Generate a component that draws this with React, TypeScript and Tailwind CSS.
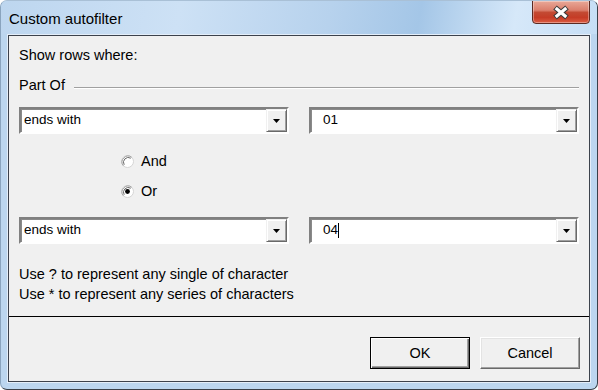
import React from "react";

function Arrow() {
  return (
    <div className="w-[21px] h-full flex items-center justify-center bg-[#f0f0f0] border border-t-[#f0f0f0] border-l-[#f0f0f0] border-r-[#696969] border-b-[#696969] shadow-[inset_1px_1px_0_#ffffff,inset_-1px_-1px_0_#a0a0a0]">
      <svg width="7" height="4" viewBox="0 0 7 4">
        <polygon points="0,0 7,0 3.5,4" fill="#000" />
      </svg>
    </div>
  );
}

function Combo({ text, pl, caret }: { text: string; pl: string; caret?: boolean }) {
  return (
    <div className="w-[270px] h-[27px] flex bg-white border-2 border-t-[#808080] border-l-[#808080] border-r-[#ffffff] border-b-[#ffffff] shadow-[inset_1px_1px_0_#8a8a8a]">
      <div className={`flex-1 flex items-start pt-[3px] text-[13.5px] leading-[16px] text-black ${pl}`}>
        <span>{text}</span>
        {caret && <span className="w-px h-[15px] bg-black mt-[1px]" />}
      </div>
      <Arrow />
    </div>
  );
}

function Radio({ checked, label }: { checked?: boolean; label: string }) {
  return (
    <div className="h-[30px] flex items-center pl-[102px] gap-[7px]">
      <svg width="13" height="13" viewBox="0 0 13 13">
        <circle cx="6.5" cy="6.5" r="6" fill="#ffffff" stroke="#d4d4d4" strokeWidth="1" />
        <path d="M2.3 10.7 A6 6 0 0 1 10.7 2.3" fill="none" stroke="#a0a0a0" strokeWidth="1" />
        <path d="M3.2 9.8 A4.8 4.8 0 0 1 9.8 3.2" fill="none" stroke="#696969" strokeWidth="1" />
        {checked && <circle cx="6.5" cy="6.5" r="2.4" fill="#000" />}
      </svg>
      <span className="text-[14.5px] leading-[20px] text-black">{label}</span>
    </div>
  );
}

export default function App() {
  return (
    <div className="w-[598px] h-[390px] flex flex-col rounded-[7px] border border-[#3a4048] border-l-[#8aa4be] border-t-[#a9c0d6] bg-[#bcd6ef] overflow-hidden font-['Liberation_Sans',Arial,sans-serif]">
      {/* title bar */}
      <div className="h-[33px] flex items-start bg-[linear-gradient(100deg,#bdd6ef_0%,#cde1f5_30%,#b7d2ed_55%,#a4c6e7_70%,#d6e8f9_86%,#c6def5_100%)]">
        <div className="pl-[8px] pt-[9px] text-[15px] leading-[17px] text-black">Custom autofilter</div>
        <div className="ml-auto mr-[7px] -mt-px w-[58px] h-[24px] rounded-b-[4px] border border-[#5b2a22] flex items-center justify-center bg-[linear-gradient(180deg,#e9a898_0%,#db7f6c_42%,#c34a33_52%,#c53c26_75%,#dc5d43_100%)] shadow-[inset_0_0_0_1px_rgba(255,255,255,0.35)]">
          <svg width="18" height="15" viewBox="0 0 18 15">
            <path d="M3 2.5 L15 12.5 M15 2.5 L3 12.5" stroke="#3c3c3c" strokeWidth="5.5" strokeLinecap="butt" />
            <path d="M3.7 3.1 L14.3 11.9 M14.3 3.1 L3.7 11.9" stroke="#ffffff" strokeWidth="3.2" strokeLinecap="butt" />
          </svg>
        </div>
      </div>
      {/* client */}
      <div className="flex-1 mx-[6px] mb-[6px] border border-[#e4eef9] flex">
        <div className="flex-1 border border-[#3c424c] flex flex-col bg-[#f0f0f0]">
          <div className="h-[281px] border-b border-black pl-[10px] pr-[10px] pt-[9px] flex flex-col text-black">
            <div className="h-[20px] text-[14.5px] leading-[20px]">Show rows where:</div>
            <div className="mt-[10px] h-[20px] flex items-start">
              <span className="text-[14.5px] leading-[20px]">Part Of</span>
              <div className="flex-1 ml-[9px] mt-[12px] h-px bg-[#a0a0a0] shadow-[0_1px_0_#ffffff]" />
            </div>
            <div className="mt-[12px] flex gap-[20px]">
              <Combo text="ends with" pl="pl-[3px]" />
              <Combo text="01" pl="pl-[12px]" />
            </div>
            <div className="mt-[12px] flex flex-col">
              <Radio label="And" />
              <Radio label="Or" checked />
            </div>
            <div className="mt-[11px] flex gap-[20px]">
              <Combo text="ends with" pl="pl-[3px]" />
              <Combo text="04" pl="pl-[12px]" caret />
            </div>
            <div className="mt-[20px] text-[14.5px] leading-[20px]">
              <div>Use ? to represent any single of character</div>
              <div>Use * to represent any series of characters</div>
            </div>
          </div>
          <div className="flex-1 flex justify-end items-start pt-[20px] pr-[9px] gap-[10px]">
            <button className="w-[100px] h-[32px] border border-black bg-[#f0f0f0] shadow-[inset_1px_1px_0_#ffffff,inset_-1px_-1px_0_#696969,inset_-2px_-2px_0_#a0a0a0] text-[14.5px] leading-[20px] text-black">
              OK
            </button>
            <button className="w-[100px] h-[32px] border border-t-white border-l-white border-r-[#696969] border-b-[#696969] bg-[#f0f0f0] shadow-[inset_-1px_-1px_0_#a0a0a0,inset_1px_1px_0_#e3e3e3] text-[14.5px] leading-[20px] text-black">
              Cancel
            </button>
          </div>
        </div>
      </div>
    </div>
  );
}
